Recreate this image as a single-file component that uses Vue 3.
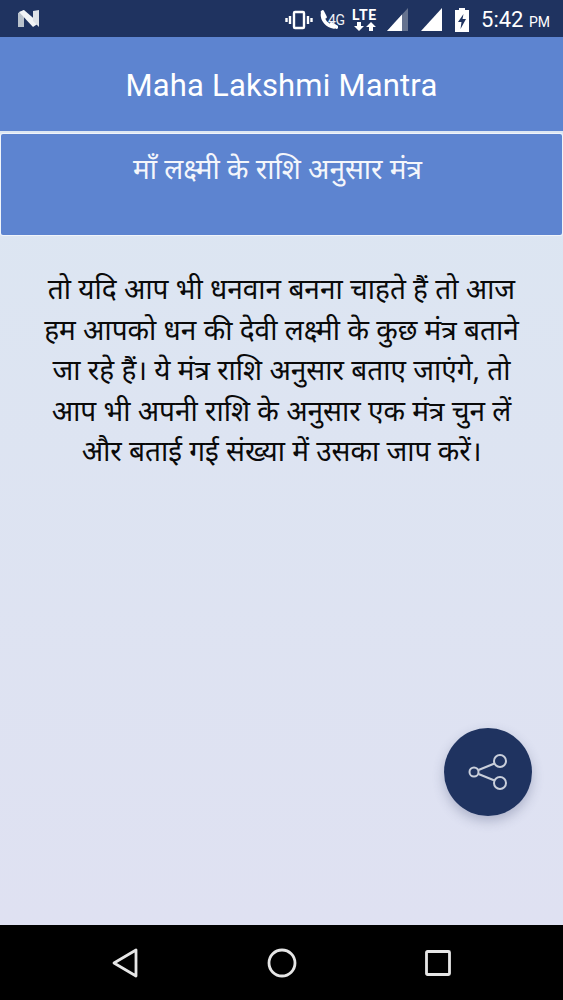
<script setup>
const lines = [
  'तो यदि आप भी धनवान बनना चाहते हैं तो आज',
  'हम आपको धन की देवी लक्ष्मी के कुछ मंत्र बताने',
  'जा रहे हैं। ये मंत्र राशि अनुसार बताए जाएंगे, तो',
  'आप भी अपनी राशि के अनुसार एक मंत्र चुन लें',
  'और बताई गई संख्या में उसका जाप करें।'
]
</script>

<template>
  <div class="screen">
    <header class="status">
      <svg class="n-logo" width="24" height="20" viewBox="0 0 24 20">
        <path d="M1 4 L7 1 V6 L1 9 Z" fill="#b9c2cc" />
        <path d="M1 8 L7 6 V18 L1 18 Z" fill="#b9c2cc" />
        <path d="M2 3 L7 1 L22 14 L16 18 Z" fill="#f2f4f6" />
        <path d="M16 2 L22 1 V18 L16 12 Z" fill="#dfe3e8" />
      </svg>
      <div class="status-right">
        <svg width="28" height="20" viewBox="0 0 28 20" fill="none" stroke="#fff" stroke-width="2.400">
          <rect x="9" y="2" width="10" height="16" rx="1" />
          <path d="M5 6V14M1.500 8V12M23 6V14M26.500 8V12" />
        </svg>
        <svg class="phone" width="19" height="20" viewBox="0 0 19 20" fill="none" stroke="#fff" stroke-linecap="round">
          <path d="M3.500 4 C3 10 8 16 15 17" stroke-width="3.600" />
          <path d="M3.500 2 L6 7 M12.500 14 L17.500 17" stroke-width="3.600" />
        </svg>
        <span class="tiny">4G</span>
        <div class="lte">
          <span>LTE</span>
          <svg width="22" height="9" viewBox="0 0 22 9" fill="#fff">
            <path d="M3 0H7V4H10L5 9L0 4H3Z" />
            <path d="M15 9H19V5H22L17 0L12 5H15Z" />
          </svg>
        </div>
        <svg class="sig1" width="21" height="23" viewBox="0 0 21 23">
          <path d="M0 23 L21 0 V23 Z" fill="#66738f" />
          <path d="M0 23 L15 6.500 V23 Z" fill="#fff" />
        </svg>
        <svg class="sig2" width="21" height="23" viewBox="0 0 21 23">
          <path d="M0 23 L21 0 V23 Z" fill="#fff" />
        </svg>
        <svg class="batt" width="14" height="24" viewBox="0 0 14 24">
          <path d="M4 0H10V2H14V24H0V2H4Z" fill="#fff" />
          <path d="M8.500 6 L3 14 H6.500 L5.500 21 L11 11 H7.500 Z" fill="#1f3360" />
        </svg>
        <span class="clock">5:42 <small>PM</small></span>
      </div>
    </header>

    <div class="appbar">Maha Lakshmi Mantra</div>

    <main class="content">
      <section class="card">माँ लक्ष्मी के राशि अनुसार मंत्र</section>
      <div class="body-text">
        <p v-for="line in lines" :key="line">{{ line }}</p>
      </div>
      <button class="fab" aria-label="Share">
        <svg width="42" height="42" viewBox="0 0 42 42" fill="none" stroke="#c9cfdb" stroke-width="2">
          <circle cx="7" cy="21" r="4.500" />
          <circle cx="33" cy="10" r="6" />
          <circle cx="33" cy="32" r="6" />
          <path d="M11.500 19L27.500 12.500M11.500 23L27.500 29.500" />
        </svg>
      </button>
    </main>

    <nav class="navbar">
      <svg width="26" height="30" viewBox="0 0 26 30" fill="none" stroke="#e6e6e6" stroke-width="2.800" stroke-linejoin="round">
        <path d="M24 2 V28 L2 15 Z" />
      </svg>
      <svg width="30" height="30" viewBox="0 0 30 30" fill="none" stroke="#e6e6e6" stroke-width="2.800">
        <circle cx="15" cy="15" r="13" />
      </svg>
      <svg width="26" height="26" viewBox="0 0 26 26" fill="none" stroke="#e6e6e6" stroke-width="2.800" stroke-linejoin="round">
        <rect x="1.500" y="1.500" width="23" height="23" rx="1" />
      </svg>
    </nav>
  </div>
</template>

<style>
html, body { margin: 0; padding: 0; }
</style>

<style scoped>
.screen {
  width: 563px;
  height: 1000px;
  display: flex;
  flex-direction: column;
  overflow: hidden;
  font-family: "Noto Sans", "Noto Sans Devanagari", Roboto, sans-serif;
}
.status {
  height: 37px;
  flex: none;
  background: #1f3360;
  display: flex;
  align-items: center;
  justify-content: space-between;
  padding: 0 13px 0 17px;
  box-sizing: border-box;
}
.status-right {
  display: flex;
  align-items: center;
  color: #fff;
  padding-top: 2px;
}
.phone { margin-left: 6px; }
.tiny {
  font: 14px/14px Roboto, sans-serif;
  width: 15px;
  align-self: flex-start;
  margin: 6px 0 0 -10px;
  letter-spacing: -0.5px;
  color: #eef0f5;
}
.lte {
  display: flex;
  flex-direction: column;
  align-items: center;
  font: bold 14px/14px Roboto, sans-serif;
  letter-spacing: 0.8px;
  margin-left: 8px;
  width: 27px;
}
.sig1 { margin-left: 9px; }
.sig2 { margin-left: 13px; }
.batt { margin-left: 13px; }
.clock {
  font: 22px Roboto, sans-serif;
  margin-left: 12px;
}
.clock small { font-size: 14px; }
.appbar {
  height: 94px;
  flex: none;
  box-sizing: border-box;
  background: #5d84d0;
  color: #fff;
  font: 31px/98px Roboto, sans-serif;
  text-align: center;
  letter-spacing: 0.2px;
}
.content {
  position: relative;
  flex: 1;
  min-height: 0;
  background: linear-gradient(#dce6f2, #dfe1f2);
  padding-top: 3px;
}
.card {
  margin: 0 1px;
  height: 101px;
  box-sizing: border-box;
  background: #5d84d0;
  border-radius: 2px;
  box-shadow: 0 0 0 1px #f0f4fa;
  color: #f4f6fb;
  font-size: 28px;
  line-height: 36px;
  padding: 16px 8px 0 0;
  text-align: center;
}
.body-text {
  margin-top: 33px;
  color: #0a0a0a;
  font-size: 28px;
  line-height: 40.500px;
  text-align: center;
}
.body-text p { margin: 0; white-space: nowrap; }
.fab {
  position: absolute;
  left: 444px;
  top: 597px;
  width: 88px;
  height: 88px;
  border: 0;
  border-radius: 50%;
  background: #1f3360;
  box-shadow: 0 5px 12px rgba(60, 70, 110, .3);
  display: flex;
  align-items: center;
  justify-content: center;
  padding: 0;
}
.navbar {
  height: 75px;
  flex: none;
  background: #000;
  display: flex;
  align-items: center;
  justify-content: space-between;
  padding: 0 112px;
  box-sizing: border-box;
}
</style>
